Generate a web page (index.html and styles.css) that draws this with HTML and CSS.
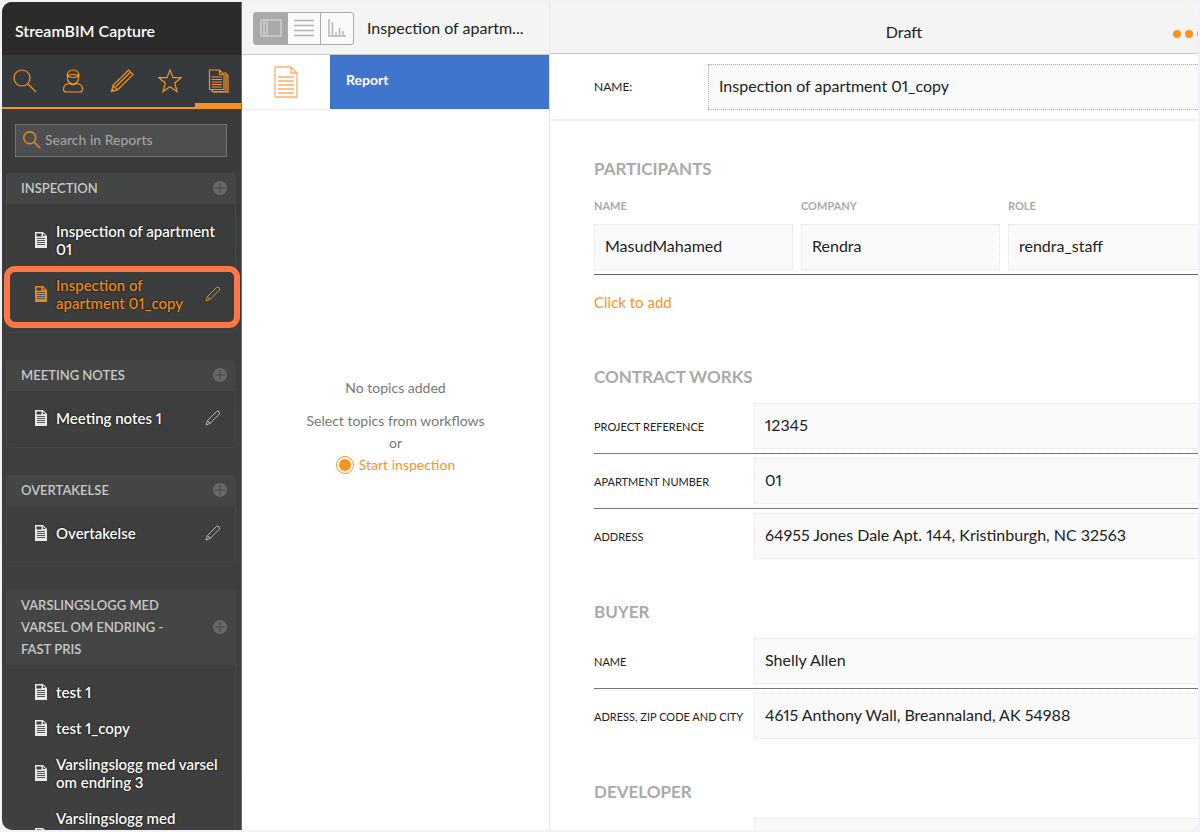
FILE: index.html
```html
<!DOCTYPE html>
<html lang="en">
<head>
    <meta charset="UTF-8">
    <meta name="viewport" content="width=device-width, initial-scale=1.0">
    <title>StreamBIM Capture</title>
    <link rel="stylesheet" href="styles.css">
</head>
<body>

    <!-- shared icons -->
    <svg class="sprite" aria-hidden="true">
        <symbol id="i-search" viewBox="0 0 24 24"><circle cx="9" cy="9" r="8"/><path d="M15 15l8 8"/></symbol>
        <symbol id="i-file" viewBox="0 0 12 16"><path class="fill" fill-rule="evenodd" d="M0 0h8l4 4v12H0zM1.500 1.500v3h5v-3zM8 1.500V4h2.500z"/><path class="cut" d="M2 6.500h8M2 8.500h8M2 10.500h8M2 12.500h8"/></symbol>
        <symbol id="i-pen" viewBox="0 0 16 16"><path d="M1 15l1.500-4.500L11.500 1.500q1.300-.9 2.500.3t.2 2.500L5.200 13.300zM2.500 10.500l2.700 2.800"/></symbol>
        <symbol id="i-plus" viewBox="0 0 16 16"><circle cx="8" cy="8" r="7.500"/><path d="M8 3v10M3 8h10"/></symbol>
    </svg>

    <div class="app">
        <aside class="sidebar">
            <h1 class="brand">StreamBIM Capture</h1>
            <nav class="tabs">
                <button class="tab" aria-label="Search"><svg><use href="#i-search"/></svg></button>
                <button class="tab" aria-label="People"><svg viewBox="0 0 24 24"><path d="M6 6.500a6 5.500 0 0 1 12 0M6.500 6.500V9a5.500 6 0 0 0 11 0V6.500M6 6.500q6 4 12 0q-6-2-12 0M8.500 14.500c-4 .3-6 2-6 6q0 2.500 3 2.500h13q3 0 3-2.500c0-4-2-5.700-6-6q-3.500 2.500-7 0z"/></svg></button>
                <button class="tab" aria-label="Edit"><svg viewBox="0 0 24 24"><path d="M1.500 22.500l1.500-6L18.500 1l4.500 4.500L7.500 21zM3 16.500l4.500 4.500M6 17.500L20 3.500M2 20l2 2"/></svg></button>
                <button class="tab" aria-label="Favourites"><svg viewBox="0 0 24 24"><path d="M12 1l3 7.700h8l-6.300 5.300 2.300 8.500-7-4.700-7 4.700L7.300 14 1 8.700h8z"/></svg></button>
                <button class="tab active" aria-label="Reports"><svg viewBox="0 0 24 24"><path d="M3.500 1h10l4.500 4.500V20.500H3.500zM13.500 1v4.500H18M18 4h2v18.500H6v-2M20 6h2v18H8v-1.500M5.500 8h10.500M5.500 10.500h10.500M5.500 13h10.500M5.500 15.500h10.500M5.500 18h10.500"/></svg></button>
            </nav>

            <label class="search">
                <svg><use href="#i-search"/></svg>
                <input type="search" placeholder="Search in Reports" aria-label="Search in Reports">
            </label>

            <section class="group">
                <h2>INSPECTION <button class="add" aria-label="Add inspection"><svg><use href="#i-plus"/></svg></button></h2>
                <ul>
                    <li><svg class="file"><use href="#i-file"/></svg><a href="#">Inspection of apartment 01</a></li>
                    <li class="selected"><svg class="file"><use href="#i-file"/></svg><a href="#">Inspection of apartment 01_copy</a><button class="pen" aria-label="Rename"><svg><use href="#i-pen"/></svg></button></li>
                </ul>
            </section>

            <section class="group">
                <h2>MEETING NOTES <button class="add" aria-label="Add meeting notes"><svg><use href="#i-plus"/></svg></button></h2>
                <ul>
                    <li><svg class="file"><use href="#i-file"/></svg><a href="#">Meeting notes 1</a><button class="pen" aria-label="Rename"><svg><use href="#i-pen"/></svg></button></li>
                </ul>
            </section>

            <section class="group">
                <h2>OVERTAKELSE <button class="add" aria-label="Add overtakelse"><svg><use href="#i-plus"/></svg></button></h2>
                <ul>
                    <li><svg class="file"><use href="#i-file"/></svg><a href="#">Overtakelse</a><button class="pen" aria-label="Rename"><svg><use href="#i-pen"/></svg></button></li>
                </ul>
            </section>

            <section class="group">
                <h2>VARSLINGSLOGG MED VARSEL OM ENDRING - FAST PRIS <button class="add" aria-label="Add varslingslogg"><svg><use href="#i-plus"/></svg></button></h2>
                <ul>
                    <li><svg class="file"><use href="#i-file"/></svg><a href="#">test 1</a></li>
                    <li><svg class="file"><use href="#i-file"/></svg><a href="#">test 1_copy</a></li>
                    <li><svg class="file"><use href="#i-file"/></svg><a href="#">Varslingslogg med varsel om endring 3</a></li>
                    <li><svg class="file"><use href="#i-file"/></svg><a href="#">Varslingslogg med<br>varsel om endring<br>3_copy</a></li>
                </ul>
            </section>
        </aside>

        <section class="topics">
            <header class="bar">
                <div class="views">
                    <button class="active" aria-label="Split view"><svg viewBox="0 0 22 18"><path d="M1 1h20v16H1zM7 1v16M4 1v16"/></svg></button>
                    <button aria-label="List view"><svg viewBox="0 0 22 18"><path d="M1 1.500h20M1 6.500h20M1 11.500h20M1 16.500h20"/></svg></button>
                    <button aria-label="Chart view"><svg viewBox="0 0 22 18"><path d="M3 0v17M2 17h18M6.500 3v14M10 13v4M13.500 9v8M17 12v5"/></svg></button>
                </div>
                <span class="title">Inspection of apartm...</span>
            </header>
            <div class="report">
                <svg class="page" viewBox="0 0 24 32"><path d="M1 1h16l6 6v24H1zM17 1v6h6M4 11h16M4 15h16M4 19h16M4 23h16M4 27h16"/></svg>
                <a href="#">Report</a>
            </div>
            <div class="empty">
                <p>No topics added</p>
                <p>Select topics from workflows<br>or</p>
                <button class="start"><span class="dot"></span>Start inspection</button>
            </div>
        </section>

        <main class="detail">
            <header class="bar detail-bar">
                <span>Draft</span>
                <button class="more" aria-label="More"><i></i><i></i><i></i></button>
            </header>
            <form class="sheet">
                <div class="name-row">
                    <label for="name">NAME:</label>
                    <input id="name" type="text" value="Inspection of apartment 01_copy">
                </div>

                <h3>PARTICIPANTS</h3>
                <table class="people">
                    <thead>
                        <tr><th>NAME</th><th>COMPANY</th><th>ROLE</th></tr>
                    </thead>
                    <tbody>
                        <tr>
                            <td><input type="text" aria-label="Name" value="MasudMahamed"></td>
                            <td><input type="text" aria-label="Company" value="Rendra"></td>
                            <td><input type="text" aria-label="Role" value="rendra_staff"></td>
                        </tr>
                    </tbody>
                </table>
                <button type="button" class="link">Click to add</button>

                <h3>CONTRACT WORKS</h3>
                <div class="fields">
                    <div class="field"><label for="ref">PROJECT REFERENCE</label><input id="ref" type="text" value="12345"></div>
                    <div class="field"><label for="apt">APARTMENT NUMBER</label><input id="apt" type="text" value="01"></div>
                    <div class="field"><label for="addr">ADDRESS</label><input id="addr" type="text" value="64955 Jones Dale Apt. 144, Kristinburgh, NC 32563"></div>
                </div>

                <h3>BUYER</h3>
                <div class="fields">
                    <div class="field"><label for="buyer">NAME</label><input id="buyer" type="text" value="Shelly Allen"></div>
                    <div class="field"><label for="zip">ADRESS, ZIP CODE AND CITY</label><input id="zip" type="text" value="4615 Anthony Wall, Breannaland, AK 54988"></div>
                </div>

                <h3>DEVELOPER</h3>
                <div class="fields">
                    <div class="field"><span></span><input type="text" aria-label="Developer name"></div>
                </div>
            </form>
        </main>
    </div>

</body>
</html>
```
FILE: styles.css
```css
* {
    box-sizing: border-box;
}

body {
    margin: 0;
    padding: 2px;
    height: 100vh;
    overflow: hidden;
    background-color: #f2f2f9;
    font-family: Lato, "Noto Sans", sans-serif;
    font-size: 14px;
    font-variant-numeric: proportional-nums;
    color: #222;
}

button {
    font: inherit;
    color: inherit;
    background: none;
    border: none;
    padding: 0;
    cursor: pointer;
}

input {
    font: inherit;
    font-variant-numeric: proportional-nums;
    color: inherit;
    min-width: 0;
}

svg {
    fill: none;
    stroke: currentColor;
}

.sprite {
    display: none;
}

.app {
    display: flex;
    height: 100%;
    border-radius: 10px;
    overflow: hidden;
    background-color: #fff;
}

/* Sidebar */
.sidebar {
    width: 240px;
    flex: none;
    overflow: hidden;
    background: linear-gradient(#38393b, #3d3e3d 50%, #3f3f3f);
    border-right: 1px solid #6b6b6b;
    color: #fff;
}

.brand {
    margin: 0;
    height: 53px;
    line-height: 58px;
    padding-left: 13px;
    font-size: 16px;
    font-weight: 600;
    background-color: #2b2b2b;
}

.tabs {
    display: flex;
    height: 54px;
    border-bottom: 2px solid #f7931e;
    background-color: #373a3d;
    color: #f7931e;
}

.tab {
    flex: 1;
    height: 54px;
    padding: 4px 2px 0 0;
    border-bottom: 6px solid transparent;
}

.tab.active {
    border-bottom-color: #f7931e;
    padding-right: 0;
}

.tab svg {
    display: block;
    margin: 0 auto;
    width: 24px;
    height: 24px;
    stroke-width: 1.2;
}

.search {
    display: flex;
    align-items: center;
    gap: 4px;
    height: 33px;
    margin: 15px 14px 16px 13px;
    padding: 0 7px 2px;
    background-color: #4c4e50;
    border: 1px solid #707274;
}

.search svg {
    flex: none;
    width: 18px;
    height: 18px;
    stroke-width: 2;
    color: #e08a24;
}

.search input {
    flex: 1;
    border: none;
    outline: none;
    background: none;
    padding: 0;
}

.search input::placeholder {
    color: #a3a3a3;
    font-weight: 500;
}

.group {
    margin: 0 5px 27px 4px;
    border-radius: 4px;
    box-shadow: inset 0 0 0 1px #454545;
}

.group h2 {
    display: flex;
    align-items: center;
    justify-content: space-between;
    gap: 30px;
    margin: 0;
    padding: 4px 8px 5px 15px;
    line-height: 22px;
    font-size: 13px;
    font-weight: 600;
    color: #c8c8c8;
    background-color: #444545;
    border-radius: 4px 4px 0 0;
}

.add svg {
    display: block;
    width: 16px;
    height: 16px;
    fill: #686868;
    stroke: #444;
}

.group ul {
    list-style: none;
    margin: 0;
    padding: 10px 0 11px;
}

.group li {
    position: relative;
    display: flex;
    align-items: center;
    gap: 9px;
    padding: 8px 15px 10px 29px;
    line-height: 18px;
    font-size: 15px;
    font-weight: 600;
    text-shadow: 0 0 2px #000;
}

.group a {
    flex: 1;
    color: inherit;
    text-decoration: none;
}

.file {
    flex: none;
    width: 12px;
    height: 16px;
    color: #e8e8e8;
}

.fill {
    fill: currentColor;
    stroke: none;
}

.cut {
    stroke: #555;
}

.pen {
    color: #bbb;
}

.pen svg {
    display: block;
    width: 16px;
    height: 16px;
}

.group .selected,
.selected .file,
.selected .pen {
    color: #e58a1f;
}

/* Frame drawn over the selected report */
.selected::after {
    content: "";
    position: absolute;
    inset: -2px -4px -6px -2px;
    border: 6px solid #ff7747;
    border-radius: 11px;
    pointer-events: none;
}

/* Topics column */
.bar {
    display: flex;
    align-items: center;
    height: 53px;
    background-color: #f4f4f4;
    border-bottom: 1px solid #c8c8c8;
    font-size: 16px;
}

.topics {
    width: 308px;
    flex: none;
    border-right: 1px solid #e6e6e6;
}

.topics .bar {
    gap: 13px;
    padding-left: 11px;
}

.title {
    padding-bottom: 2px;
}

.views {
    display: flex;
    border: 1px solid #aaa;
    border-radius: 3px;
    background-color: #fafafa;
    color: #b5b5b5;
}

.views button {
    width: 33px;
    height: 31px;
    border-left: 1px solid #aaa;
}

.views .active {
    background-color: #a9a9a9;
    border-left: none;
    color: #cfcfcf;
}

.views svg {
    display: block;
    width: 22px;
    height: 18px;
    margin: 0 auto;
    stroke-width: 1.5;
}

.report {
    display: flex;
    height: 55px;
    border-bottom: 1px solid #eee;
}

.page {
    width: 24px;
    height: 32px;
    margin: 11px 32px;
    stroke-width: 1.3;
    color: #f9b367;
}

.report a {
    flex: 1;
    padding-left: 16px;
    line-height: 50px;
    background-color: #4075ce;
    color: #fff;
    font-weight: 700;
    text-decoration: none;
}

.empty {
    padding-top: 267px;
    text-align: center;
    line-height: 22px;
    color: #777;
}

.empty p {
    margin: 0 0 11px;
}

.empty p + p {
    margin: 0;
}

.start {
    display: inline-flex;
    align-items: center;
    gap: 5px;
    line-height: 22px;
    color: #f7931e;
}

.dot {
    width: 18px;
    height: 18px;
    padding: 2px;
    border: 1px solid #f7931e;
    border-radius: 50%;
    background-color: #f7931e;
    background-clip: content-box;
}

/* Detail column, the sheet runs on past the window edge */
.detail {
    flex: 1;
    min-width: 0;
    overflow: hidden;
}

.detail-bar,
.sheet {
    width: calc(100% + 60px);
}

.detail-bar {
    height: 52px;
    padding: 8px 52px 0;
    justify-content: center;
    position: relative;
}

.more {
    position: absolute;
    right: 53px;
    top: 28px;
    display: flex;
    gap: 4px;
}

.more i {
    width: 8px;
    height: 8px;
    border-radius: 50%;
    background-color: #f7931e;
}

.name-row {
    display: grid;
    grid-template-columns: 114px 1fr;
    align-items: center;
    padding: 10px 0 9px 44px;
    border-bottom: 2px solid #f1f1f1;
}

.sheet label {
    font-size: 11px;
    white-space: nowrap;
}

.sheet .name-row label {
    padding-bottom: 2px;
    font-size: 12px;
}

.sheet input {
    display: block;
    width: 100%;
    height: 46px;
    padding: 0 10px 4px;
    border: 1px dotted #e2e2e2;
    background-color: #fafafa;
    font-size: 16px;
    outline: none;
}

.sheet .name-row input {
    border-color: #f79a6c;
}

.sheet h3 {
    margin: 36px 44px 10px;
    line-height: 24px;
    font-size: 17px;
    font-weight: 700;
    color: #aaa;
}

.people {
    width: calc(100% - 87px);
    margin-left: 44px;
    table-layout: fixed;
    border-collapse: collapse;
}

.people th {
    height: 28px;
    padding: 0;
    text-align: left;
    font-size: 11px;
    font-weight: 700;
    color: #aaa;
}

.people td {
    padding: 5px 8px 4px 0;
    border-bottom: 1px solid #666;
}

.link {
    display: block;
    margin-left: 44px;
    line-height: 54px;
    font-size: 15px;
    color: #f7931e;
}

.fields {
    margin: 0 43px 0 44px;
}

.field {
    display: grid;
    grid-template-columns: 160px 1fr;
    align-items: center;
    padding: 4px 0;
    border-bottom: 1px solid #777;
}

.field:last-child {
    border-bottom-color: transparent;
}
```
